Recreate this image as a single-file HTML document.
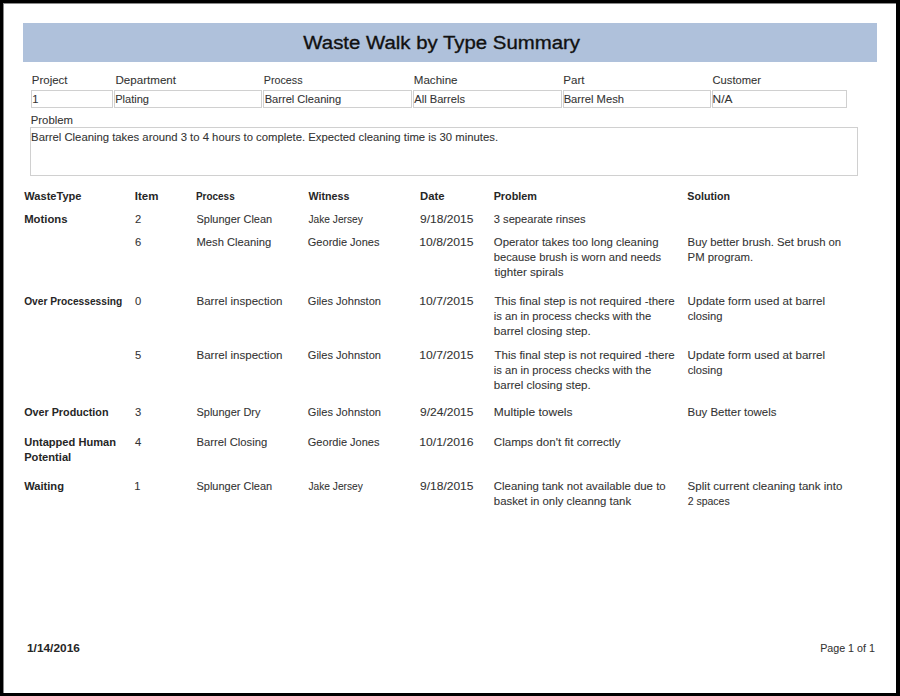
<!DOCTYPE html>
<html><head><meta charset="utf-8"><title>Waste Walk by Type Summary</title>
<style>
html,body{margin:0;padding:0;background:#000;}
body{width:900px;height:696px;overflow:hidden;position:relative;}
.page{position:absolute;left:3px;top:3px;width:893px;height:690px;background:#fff;box-shadow:inset 1px 1px 0 #8a8a8a;}
.hdr{position:absolute;left:23px;top:23px;width:854px;height:39px;background:#afc1db;}
svg{position:absolute;left:0;top:0;}
svg rect{fill:none;stroke:#d0d0d0;stroke-width:1;}
svg text{font-family:"Liberation Sans",sans-serif;font-size:11.2px;fill:#333;stroke:#333;stroke-width:0.08px;}
svg text.b{font-weight:bold;fill:#262626;stroke:none;}
</style></head>
<body>
<div class="page"></div>
<div class="hdr"></div>
<svg width="900" height="696" viewBox="0 0 900 696">
<rect x="31.5" y="90.5" width="81" height="17"/>
<rect x="114.5" y="90.5" width="147" height="17"/>
<rect x="263.5" y="90.5" width="148" height="17"/>
<rect x="413.5" y="90.5" width="148" height="17"/>
<rect x="563.5" y="90.5" width="147" height="17"/>
<rect x="712.5" y="90.5" width="134" height="17"/>
<rect x="30.5" y="127.5" width="827" height="48"/>
<text x="303.36" y="48.7" style="font-size:19.2px;fill:#111;stroke:#111;stroke-width:0.35px;" textLength="276.64" lengthAdjust="spacingAndGlyphs">Waste Walk by Type Summary</text>
<text x="31.81" y="83.7" textLength="35.68" lengthAdjust="spacingAndGlyphs">Project</text>
<text x="115.49" y="83.7" textLength="60.51" lengthAdjust="spacingAndGlyphs">Department</text>
<text x="263.81" y="83.7" textLength="38.70" lengthAdjust="spacingAndGlyphs">Process</text>
<text x="413.81" y="83.7" textLength="43.70" lengthAdjust="spacingAndGlyphs">Machine</text>
<text x="563.30" y="83.7" textLength="21.21" lengthAdjust="spacingAndGlyphs">Part</text>
<text x="712.49" y="83.7" textLength="48.51" lengthAdjust="spacingAndGlyphs">Customer</text>
<text x="32.32" y="102.9">1</text>
<text x="115.13" y="102.9" textLength="33.87" lengthAdjust="spacingAndGlyphs">Plating</text>
<text x="264.66" y="102.9" textLength="76.53" lengthAdjust="spacingAndGlyphs">Barrel Cleaning</text>
<text x="414.34" y="102.9" textLength="50.66" lengthAdjust="spacingAndGlyphs">All Barrels</text>
<text x="563.64" y="102.9" textLength="60.36" lengthAdjust="spacingAndGlyphs">Barrel Mesh</text>
<text x="712.64" y="102.9" textLength="19.85" lengthAdjust="spacingAndGlyphs">N/A</text>
<text x="30.81" y="123.5" textLength="42.19" lengthAdjust="spacingAndGlyphs">Problem</text>
<text x="31.13" y="141.0" textLength="466.91" lengthAdjust="spacingAndGlyphs">Barrel Cleaning takes around 3 to 4 hours to complete. Expected cleaning time is 30 minutes.</text>
<text x="24.34" y="199.6" class="b" textLength="57.15" lengthAdjust="spacingAndGlyphs">WasteType</text>
<text x="134.81" y="199.6" class="b" textLength="23.70" lengthAdjust="spacingAndGlyphs">Item</text>
<text x="195.98" y="199.6" class="b" textLength="38.70" lengthAdjust="spacingAndGlyphs">Process</text>
<text x="308.51" y="199.6" class="b" textLength="40.83" lengthAdjust="spacingAndGlyphs">Witness</text>
<text x="420.00" y="199.6" class="b" textLength="24.49" lengthAdjust="spacingAndGlyphs">Date</text>
<text x="493.64" y="199.6" class="b" textLength="43.36" lengthAdjust="spacingAndGlyphs">Problem</text>
<text x="687.34" y="199.6" class="b" textLength="42.66" lengthAdjust="spacingAndGlyphs">Solution</text>
<text x="24.17" y="222.8" class="b" textLength="43.34" lengthAdjust="spacingAndGlyphs">Motions</text>
<text x="135.00" y="222.8">2</text>
<text x="196.49" y="222.8" textLength="75.70" lengthAdjust="spacingAndGlyphs">Splunger Clean</text>
<text x="308.51" y="222.8" textLength="54.30" lengthAdjust="spacingAndGlyphs">Jake Jersey</text>
<text x="420.00" y="222.8" textLength="53.51" lengthAdjust="spacingAndGlyphs">9/18/2015</text>
<text x="493.81" y="222.8" textLength="91.68" lengthAdjust="spacingAndGlyphs">3 sepearate rinses</text>
<text x="135.00" y="246.0">6</text>
<text x="196.49" y="246.0" textLength="74.70" lengthAdjust="spacingAndGlyphs">Mesh Cleaning</text>
<text x="307.81" y="246.0" textLength="71.70" lengthAdjust="spacingAndGlyphs">Geordie Jones</text>
<text x="419.30" y="246.0" textLength="54.21" lengthAdjust="spacingAndGlyphs">10/8/2015</text>
<text x="493.81" y="246.0" textLength="164.70" lengthAdjust="spacingAndGlyphs">Operator takes too long cleaning</text>
<text x="493.81" y="261.1" textLength="167.19" lengthAdjust="spacingAndGlyphs">because brush is worn and needs</text>
<text x="494.51" y="276.2" textLength="69.00" lengthAdjust="spacingAndGlyphs">tighter spirals</text>
<text x="687.64" y="246.0" textLength="153.55" lengthAdjust="spacingAndGlyphs">Buy better brush. Set brush on</text>
<text x="687.64" y="261.1" textLength="65.55" lengthAdjust="spacingAndGlyphs">PM program.</text>
<text x="24.17" y="305.0" class="b" textLength="98.02" lengthAdjust="spacingAndGlyphs">Over Processessing</text>
<text x="135.00" y="305.0">0</text>
<text x="196.49" y="305.0" textLength="86.02" lengthAdjust="spacingAndGlyphs">Barrel inspection</text>
<text x="307.81" y="305.0" textLength="73.19" lengthAdjust="spacingAndGlyphs">Giles Johnston</text>
<text x="419.30" y="305.0" textLength="54.21" lengthAdjust="spacingAndGlyphs">10/7/2015</text>
<text x="494.51" y="305.0" textLength="180.17" lengthAdjust="spacingAndGlyphs">This final step is not required -there</text>
<text x="493.81" y="320.1" textLength="157.36" lengthAdjust="spacingAndGlyphs">is an in process checks with the</text>
<text x="493.81" y="335.2" textLength="96.89" lengthAdjust="spacingAndGlyphs">barrel closing step.</text>
<text x="687.64" y="305.0" textLength="137.36" lengthAdjust="spacingAndGlyphs">Update form used at barrel</text>
<text x="687.64" y="320.1" textLength="34.87" lengthAdjust="spacingAndGlyphs">closing</text>
<text x="135.00" y="358.5">5</text>
<text x="196.49" y="358.5" textLength="86.02" lengthAdjust="spacingAndGlyphs">Barrel inspection</text>
<text x="307.81" y="358.5" textLength="73.19" lengthAdjust="spacingAndGlyphs">Giles Johnston</text>
<text x="419.30" y="358.5" textLength="54.21" lengthAdjust="spacingAndGlyphs">10/7/2015</text>
<text x="494.51" y="358.5" textLength="180.17" lengthAdjust="spacingAndGlyphs">This final step is not required -there</text>
<text x="493.81" y="373.6" textLength="157.36" lengthAdjust="spacingAndGlyphs">is an in process checks with the</text>
<text x="493.81" y="388.7" textLength="96.89" lengthAdjust="spacingAndGlyphs">barrel closing step.</text>
<text x="687.64" y="358.5" textLength="137.36" lengthAdjust="spacingAndGlyphs">Update form used at barrel</text>
<text x="687.64" y="373.6" textLength="34.87" lengthAdjust="spacingAndGlyphs">closing</text>
<text x="24.17" y="416.3" class="b" textLength="84.34" lengthAdjust="spacingAndGlyphs">Over Production</text>
<text x="135.00" y="416.3">3</text>
<text x="196.49" y="416.3" textLength="64.00" lengthAdjust="spacingAndGlyphs">Splunger Dry</text>
<text x="307.81" y="416.3" textLength="73.19" lengthAdjust="spacingAndGlyphs">Giles Johnston</text>
<text x="420.00" y="416.3" textLength="53.51" lengthAdjust="spacingAndGlyphs">9/24/2015</text>
<text x="493.81" y="416.3" textLength="78.68" lengthAdjust="spacingAndGlyphs">Multiple towels</text>
<text x="687.64" y="416.3" textLength="88.85" lengthAdjust="spacingAndGlyphs">Buy Better towels</text>
<text x="24.17" y="445.6" class="b" textLength="91.83" lengthAdjust="spacingAndGlyphs">Untapped Human</text>
<text x="24.17" y="460.70000000000005" class="b" textLength="47.02" lengthAdjust="spacingAndGlyphs">Potential</text>
<text x="135.00" y="445.6">4</text>
<text x="196.49" y="445.6" textLength="70.70" lengthAdjust="spacingAndGlyphs">Barrel Closing</text>
<text x="307.81" y="445.6" textLength="71.70" lengthAdjust="spacingAndGlyphs">Geordie Jones</text>
<text x="419.30" y="445.6" textLength="54.21" lengthAdjust="spacingAndGlyphs">10/1/2016</text>
<text x="493.81" y="445.6" textLength="126.69" lengthAdjust="spacingAndGlyphs">Clamps don&#39;t fit correctly</text>
<text x="24.17" y="489.7" class="b" textLength="39.83" lengthAdjust="spacingAndGlyphs">Waiting</text>
<text x="134.30" y="489.7">1</text>
<text x="196.49" y="489.7" textLength="75.70" lengthAdjust="spacingAndGlyphs">Splunger Clean</text>
<text x="308.51" y="489.7" textLength="54.30" lengthAdjust="spacingAndGlyphs">Jake Jersey</text>
<text x="420.00" y="489.7" textLength="53.51" lengthAdjust="spacingAndGlyphs">9/18/2015</text>
<text x="493.81" y="489.7" textLength="171.85" lengthAdjust="spacingAndGlyphs">Cleaning tank not available due to</text>
<text x="493.81" y="504.8" textLength="137.34" lengthAdjust="spacingAndGlyphs">basket in only cleanng tank</text>
<text x="687.64" y="489.7" textLength="154.70" lengthAdjust="spacingAndGlyphs">Split current cleaning tank into</text>
<text x="687.64" y="504.8" textLength="42.02" lengthAdjust="spacingAndGlyphs">2 spaces</text>
<text x="27.00" y="651.7" class="b" textLength="52.85" lengthAdjust="spacingAndGlyphs">1/14/2016</text>
<text x="820.15" y="651.7" textLength="54.70" lengthAdjust="spacingAndGlyphs">Page 1 of 1</text>
</svg>
</body></html>
